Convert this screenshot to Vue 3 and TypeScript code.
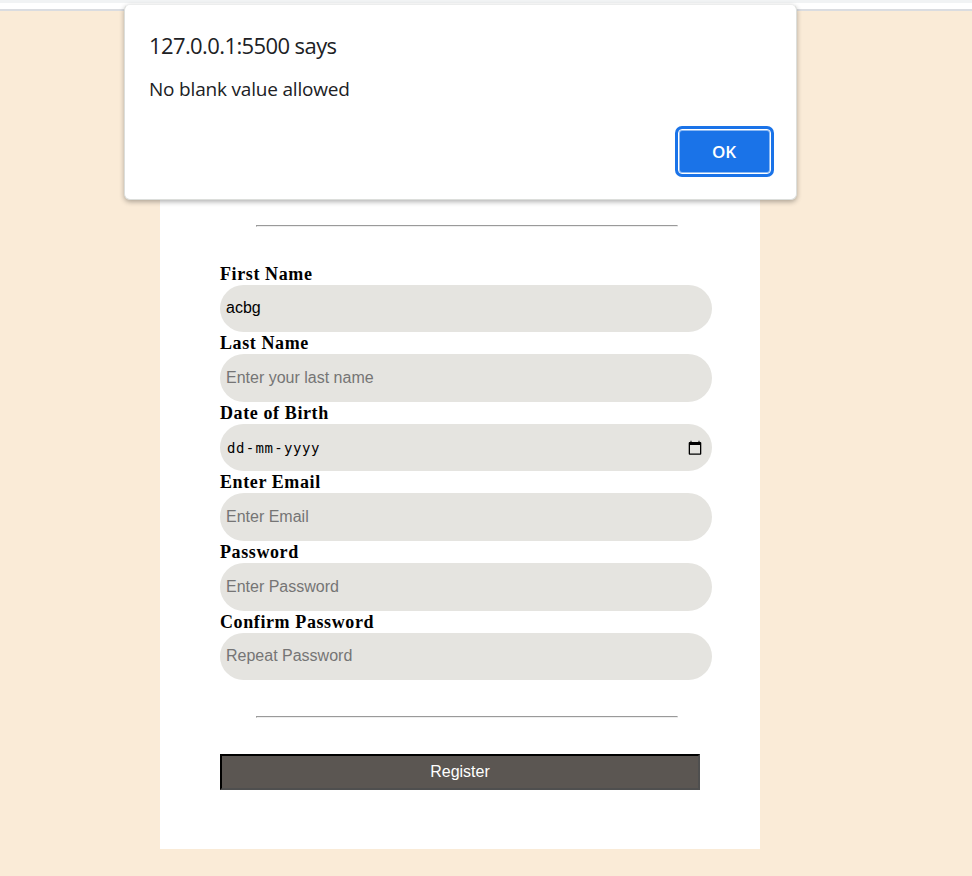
<script setup lang="ts">
import { ref } from 'vue'

interface Field {
  id: string
  label: string
  type: 'text' | 'email' | 'password' | 'date'
  placeholder: string
  value: string
}

const fields = ref<Field[]>([
  { id: 'first', label: 'First Name', type: 'text', placeholder: '', value: 'acbg' },
  { id: 'last', label: 'Last Name', type: 'text', placeholder: 'Enter your last name', value: '' },
  { id: 'dob', label: 'Date of Birth', type: 'date', placeholder: '', value: '' },
  { id: 'email', label: 'Enter Email', type: 'email', placeholder: 'Enter Email', value: '' },
  { id: 'password', label: 'Password', type: 'password', placeholder: 'Enter Password', value: '' },
  { id: 'confirm', label: 'Confirm Password', type: 'password', placeholder: 'Repeat Password', value: '' },
])
</script>

<template>
  <div class="page">
    <div class="toolbar"></div>
    <form class="card" @submit.prevent>
      <hr class="rule" />
      <div class="fields">
        <div v-for="field in fields" :key="field.id" class="field">
          <label class="label" :for="field.id">{{ field.label }}</label>
          <div v-if="field.type === 'date'" :id="field.id" class="input date">
            <span class="date-text"><span>dd</span><span class="dash">-</span><span>mm</span><span class="dash">-</span><span>yyyy</span></span>
            <svg class="calendar" width="14" height="16" viewBox="0 0 14 16">
              <path d="M2.5 0.7h1v1.3h7v-1.3h1v1.3h0.8a1 1 0 0 1 1 1v10.8a0.9 0.9 0 0 1-0.9 0.9h-10.8a0.9 0.9 0 0 1-0.9-0.9v-10.8a1 1 0 0 1 1-1h0.8zM2 5v8.5h10v-8.5z" fill="#000" fill-rule="evenodd" />
            </svg>
          </div>
          <input v-else :id="field.id" v-model="field.value" class="input" :type="field.type" :placeholder="field.placeholder" />
        </div>
      </div>
      <hr class="rule" />
      <button class="register" type="submit">Register</button>
    </form>
    <div class="dialog" role="alertdialog">
      <div class="title">127.0.0.1:5500 says</div>
      <div class="message">No blank value allowed</div>
      <button class="ok" type="button">OK</button>
    </div>
  </div>
</template>

<style>
body {
  margin: 0;
  background: #faebd7;
}
</style>

<style scoped>
.page {
  position: relative;
  box-sizing: border-box;
  height: 876px;
  overflow: hidden;
  background: #faebd7;
}
.toolbar {
  box-sizing: border-box;
  height: 11px;
  border-top: 3px solid #f1f3f4;
  border-bottom: 2px solid #dadce0;
  background: #fff;
}
.card {
  box-sizing: border-box;
  width: 600px;
  height: 838px;
  margin-left: 160px;
  padding: 214px 60px 0;
  background: #fff;
}
.rule {
  box-sizing: border-box;
  width: 422px;
  height: 2px;
  margin: 0 0 0 36px;
  border: 1px solid;
  border-color: #9a9a9a #eee #eee #9a9a9a;
}
.fields {
  padding: 35.8px 0 35.9px;
}
.field {
  display: flex;
  flex-direction: column;
}
.label {
  height: 22px;
  font: bold 18px/22px "Liberation Serif", serif;
  letter-spacing: 0.6px;
  color: #000;
}
.input {
  box-sizing: border-box;
  width: 492px;
  height: 47.55px;
  padding: 0 6px 2px;
  border: 0;
  border-radius: 24px;
  outline: 0;
  background: #e5e4e0;
  font: 16px "Liberation Sans", sans-serif;
  color: #000;
}
.input:placeholder-shown:not([placeholder=""]) {
  padding-bottom: 0;
}
.input::placeholder {
  color: #757575;
  opacity: 1;
}
.date {
  display: flex;
  align-items: center;
  justify-content: space-between;
  padding: 0 10px 0 7px;
}
.date-text {
  display: flex;
  font: 14px "DejaVu Sans Mono", monospace;
  letter-spacing: 0.6px;
}
.dash {
  padding: 0 0.7px;
}
.register {
  display: block;
  box-sizing: border-box;
  width: 480px;
  height: 36px;
  margin-top: 36px;
  padding: 0;
  border: 2px solid;
  border-color: #000 #4f4f4f #4f4f4f #000;
  background: #5b5652;
  font: 16px "Liberation Sans", sans-serif;
  color: #fff;
}
.dialog {
  position: absolute;
  top: 4px;
  left: 124px;
  display: flex;
  flex-direction: column;
  box-sizing: border-box;
  width: 673px;
  height: 196px;
  padding: 25px 25px 0 24px;
  border: 1px solid #dcdedb;
  border-top-color: #eceded;
  border-radius: 6px;
  background: #fff;
  box-shadow: 0 2px 5px rgba(0, 0, 0, 0.3);
  color: #202124;
}
.title {
  font: 22px/30px "Open Sans", sans-serif;
  letter-spacing: -0.6px;
}
.message {
  margin-top: 15px;
  font: 19px/28px "Open Sans", sans-serif;
  letter-spacing: -0.19px;
}
.ok {
  align-self: flex-end;
  box-sizing: border-box;
  width: 93px;
  height: 45px;
  margin: 26px 0 0;
  padding: 0 1px 1px 0;
  border: 1.5px solid #fff;
  border-radius: 4px;
  box-shadow: 0 0 0 3px #1a73e8, inset 0 0 0 1px #8cb9f3;
  background: #1a73e8;
  font: 600 17px "Open Sans", sans-serif;
  letter-spacing: -0.2px;
  color: #fff;
}
</style>
